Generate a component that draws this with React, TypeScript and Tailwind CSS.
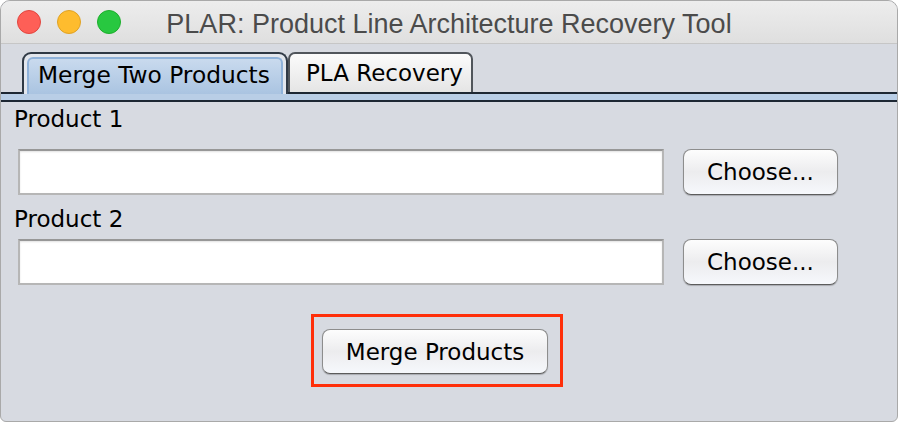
import React from "react";

const body = { fontFamily: '"DejaVu Sans", "Liberation Sans", sans-serif' };
const titleFont = { fontFamily: '"Liberation Sans", Arial, sans-serif' };

const AquaButton = ({ label, className }: { label: string; className: string }) => (
	<button
		className={
			"flex items-center justify-center rounded-[8px] border border-[#8d8d8d] border-b-[#5c5c5c] bg-gradient-to-b from-[#fdfdfd] via-[#ececee] to-[#f6f8fc] text-[23px] leading-[28px] text-black shadow-[0_1px_1px_rgba(0,0,0,0.22)] " +
			className
		}
		style={body}
	>
		{label}
	</button>
);

const TextField = () => (
	<div className="h-[46px] w-[646px] border-2 border-[#b6b6b6] border-t-[#979797] bg-white shadow-[inset_0_1px_2px_rgba(0,0,0,0.12)]" />
);

export default function App() {
	return (
		<div className="h-[422px] w-[898px] bg-white">
			<div className="flex h-full w-full flex-col overflow-hidden rounded-t-[10px] rounded-b-[6px] border border-[#a9a9a9] bg-[#d7dae1]">
				{/* title bar */}
				<div className="relative flex h-[43px] shrink-0 justify-center border-b border-[#c6c6c6] bg-gradient-to-b from-[#ededed] to-[#dfdfdf]">
					<div className="absolute left-[16px] top-[9px] flex gap-[16px]">
						<span className="h-[24px] w-[24px] rounded-full border border-[#e1463f] bg-[#fe5f57]" />
						<span className="h-[24px] w-[24px] rounded-full border border-[#dfa225] bg-[#febc2e]" />
						<span className="h-[24px] w-[24px] rounded-full border border-[#1dae2c] bg-[#28c840]" />
					</div>
					<span className="pt-[8px] text-[27px] leading-[30px] text-[#4b4b4b]" style={titleFont}>
						PLAR: Product Line Architecture Recovery Tool
					</span>
				</div>

				{/* tabs */}
				<div className="flex items-end pl-[21px] pt-[8px]" style={body}>
					<div className="relative z-10 -mb-[2px] h-[42px] w-[266px] rounded-t-[9px] border-2 border-b-0 border-[#2f3945] bg-[#e2e6ed] px-[3px] pt-[3px]">
						<div className="h-full rounded-t-[6px] border-2 border-b-0 border-[#8fb2da] bg-gradient-to-b from-[#c9daee] to-[#aac4e1] pl-[9px] pt-[2px] text-[23.3px] leading-[28px] text-black">
							Merge Two Products
						</div>
					</div>
					<div className="h-[40px] w-[185px] rounded-t-[7px] border-2 border-b-0 border-[#50555b] bg-gradient-to-b from-[#fbfbfb] to-[#e5e5e5] pl-[16px] pt-[5px] text-[23px] leading-[28px] text-black">
						PLA Recovery
					</div>
				</div>
				<div className="h-[10px] shrink-0 border-y-2 border-[#1d2733] bg-[#b9cee6]" />

				{/* content */}
				<div className="flex flex-col pl-[13px] pt-[3px]" style={body}>
					<span className="text-[23px] leading-[28px] text-black">Product 1</span>
					<div className="ml-[4px] mt-[16px] flex items-center gap-[19px]">
						<TextField />
						<AquaButton label="Choose..." className="h-[46px] w-[155px]" />
					</div>
					<span className="mt-[10px] text-[23px] leading-[28px] text-black">Product 2</span>
					<div className="ml-[4px] mt-[6px] flex items-center gap-[19px]">
						<TextField />
						<AquaButton label="Choose..." className="h-[46px] w-[155px]" />
					</div>
					<div className="ml-[297px] mt-[29px] h-[73px] w-[252px] border-[3px] border-[#ff2f0a] pl-[8px] pt-[12px]">
						<AquaButton label="Merge Products" className="h-[45px] w-[226px]" />
					</div>
				</div>
			</div>
		</div>
	);
}
